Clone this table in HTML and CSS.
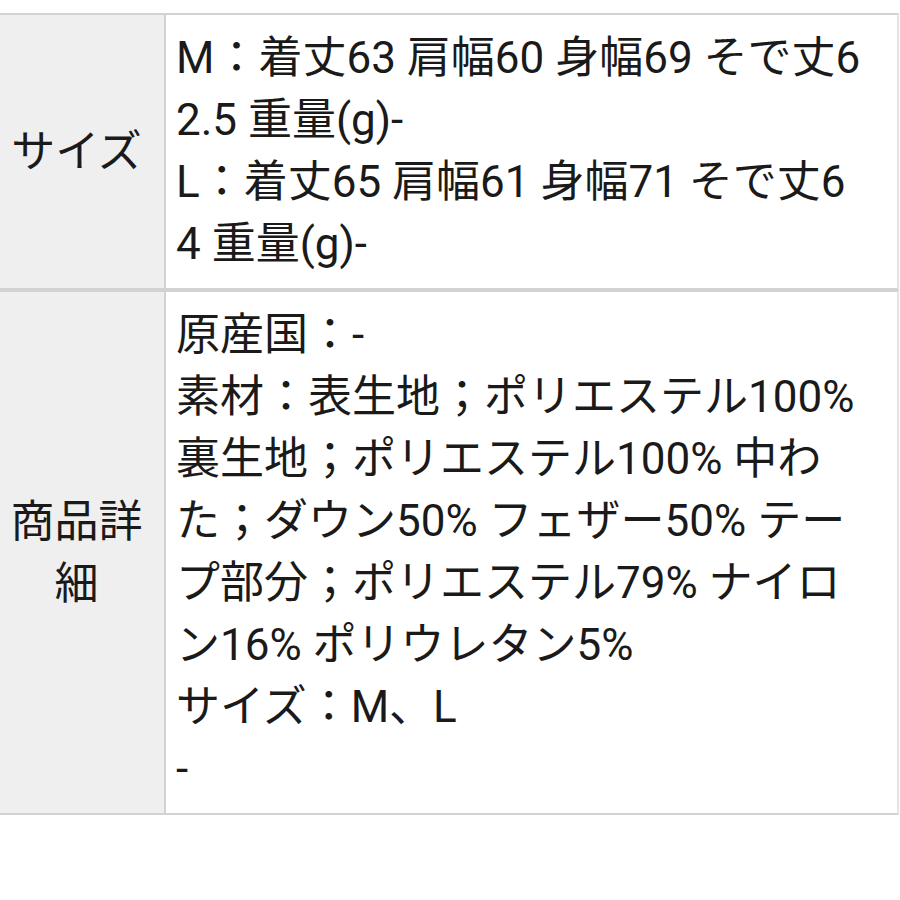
FILE: index.html
```html
<!DOCTYPE html>
<html lang="ja">
<head>
<meta charset="utf-8">
<title>商品情報</title>
<link rel="stylesheet" href="styles.css">
</head>
<body>
<div class="spec">
  <div class="row">
    <div class="label"><span class="label-text">サイズ</span></div>
    <div class="value">M：着丈63 肩幅60 身幅69 そで丈6<br>2.5 重量(g)-<br>L：着丈65 肩幅61 身幅71 そで丈6<br>4 重量(g)-</div>
  </div>
  <div class="row">
    <div class="label"><span class="label-text">商品詳細</span></div>
    <div class="value">原産国：-<br>素材：表生地；ポリエステル100%<br>裏生地；ポリエステル100% 中わ<br>た；ダウン50% フェザー50% テー<br>プ部分；ポリエステル79% ナイロ<br>ン16% ポリウレタン5%<br>サイズ：M、L<br>-</div>
  </div>
</div>
</body>
</html>
```
FILE: styles.css
```css
html, body {
  margin: 0;
  padding: 0;
  background: #ffffff;
}
body {
  padding-top: 13px;
  font-family: Roboto, "Noto Sans CJK JP", "Noto Sans", sans-serif;
  font-size: 44px;
  line-height: 62px;
  color: #1a1a1a;
}
.spec {
  width: 899px;
  display: flex;
  flex-direction: column;
}
.row {
  display: grid;
  grid-template-columns: 166px 1fr;
  border-top: 2px solid #d2d2d2;
  border-bottom: 2px solid #d2d2d2;
  border-right: 2px solid #e4e4e4;
}
.label {
  background: #efefef;
  border-right: 2px solid #d2d2d2;
  padding: 0 0 0 10px;
  display: flex;
  align-items: center;
}
.label-text {
  display: block;
  width: 133px;
  text-align: center;
}
.value {
  padding: 12px 0 13px 10px;
  white-space: nowrap;
}
```
